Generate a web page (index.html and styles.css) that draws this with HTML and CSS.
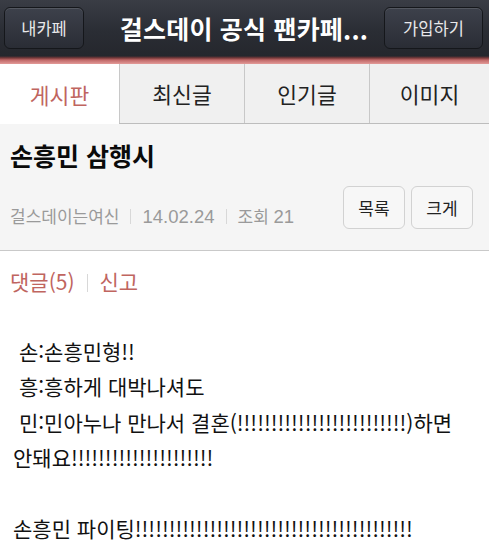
FILE: index.html
```html
<!DOCTYPE html>
<html lang="ko">
    <head>
        <meta charset="utf-8">
        <title>손흥민 삼행시</title>
        <meta name="viewport" content="width=device-width, initial-scale=1">
        <link rel="stylesheet" href="styles.css">
    </head>
    <body>
        <header>
            <button class="top-button">내카페</button>
            <h1>걸스데이 공식 팬카페...</h1>
            <button class="top-button">가입하기</button>
        </header>
        <nav>
            <a class="selected">게시판</a>
            <a>최신글</a>
            <a>인기글</a>
            <a>이미지</a>
        </nav>
        <section class="post-head">
            <h2>손흥민 삼행시</h2>
            <div class="post-meta">
                <p>걸스데이는여신<i></i><span>14.02.24</span><i></i>조회 <span>21</span></p>
                <button>목록</button>
                <button>크게</button>
            </div>
        </section>
        <main>
            <p class="post-links">댓글(5)<i></i>신고</p>
            <article>
                <p>&nbsp;손:손흥민형!!</p>
                <p>&nbsp;흥:흥하게 대박나셔도</p>
                <p>&nbsp;민:민아누나 만나서 결혼(!!!!!!!!!!!!!!!!!!!!!!!!!)하면 안돼요!!!!!!!!!!!!!!!!!!!!!</p>
                <p>&nbsp;</p>
                <p>손흥민 파이팅!!!!!!!!!!!!!!!!!!!!!!!!!!!!!!!!!!!!!!!!!</p>
            </article>
        </main>
    </body>
</html>
```

FILE: styles.css
```css
:root {
    --color-top: #2a2d34;
    --color-top-light: #3a3d45;
    --color-accent: #c0655f;
    --color-tab: #f0f0f0;
    --color-tab-border: #c8c8c8;
    --color-head: #f5f5f5;
    --color-meta: #9a9a9a;
    --padding-X: 10px;
}
* { padding: 0; margin: 0; box-sizing: border-box; font-family: "Noto Sans CJK KR", "Noto Sans", sans-serif; }
html, body { height: 100%; }
body { background-color: white; color: #111; overflow: hidden; }
button { font: inherit; cursor: pointer; }
/* top bar */
header {
    height: 64px; display: flex; align-items: flex-start; justify-content: space-between;
    padding: 7px 6px 0 4px;
    background: linear-gradient(to bottom, var(--color-top-light), var(--color-top) 50%, #25272d 56px, #7a3a3a 58px, #c06868 60px, #e39a98 64px);
}
.top-button {
    width: 80px; height: 42px; border-radius: 6px;
    border: solid 1px #15171b; color: #e8e8ea; font-size: 16.5px;
    background: linear-gradient(to bottom, #3d414b, #2a2d35);
    box-shadow: inset 0 1px 0 rgba(255, 255, 255, 0.12);
}
.top-button:last-child { width: 99px; }
header h1 { color: white; font-size: 25px; font-weight: bold; line-height: 42px; letter-spacing: 0.2px; white-space: nowrap; margin-left: 20px; }
/* tabs */
nav { display: flex; height: 60px; border-bottom: solid 1px #bdbdbd; }
nav a {
    flex: 125px; display: flex; align-items: center; justify-content: center;
    font-size: 21.5px; color: #222; background-color: var(--color-tab);
    border-left: solid 1px var(--color-tab-border);
}
nav a.selected { flex: 119px; background-color: white; color: var(--color-accent); border-left: none; margin-bottom: -1px; }
nav a:last-child { flex: 120px; }
/* post header */
.post-head { background-color: var(--color-head); border-bottom: solid 1px #c9c9c9; padding: 16px var(--padding-X) 0 var(--padding-X); height: 127px; }
.post-head h2 { font-size: 25px; font-weight: bold; line-height: 30px; color: #0a0a0a; }
.post-meta { display: flex; margin-top: 16px; }
.post-meta p { flex: auto; align-self: flex-end; color: var(--color-meta); font-size: 17px; line-height: 24px; }
.post-meta span { font-family: "Liberation Sans", sans-serif; font-size: 18.5px; }
.post-meta i, .post-links i { display: inline-block; width: 1px; height: 15px; background-color: #d8d8d8; margin: 0 11px; vertical-align: -1px; }
.post-meta button {
    width: 62px; height: 43px; margin-left: 10px; margin-right: 6px;
    border: solid 1px #d2d2d2; border-radius: 6px; background-color: #f7f7f7; color: #222; font-size: 17px;
}
.post-meta button:last-child { margin-left: 0; }
/* content */
main { padding: 0 var(--padding-X); }
.post-links { color: var(--color-accent); font-size: 21px; line-height: 30px; margin-top: 15px; }
.post-links i { height: 18px; margin: 0 12px; vertical-align: -2px; }
article { margin-top: 38px; font-size: 21px; line-height: 35.4px; margin-left: 3px; margin-right: 20px; }
```
